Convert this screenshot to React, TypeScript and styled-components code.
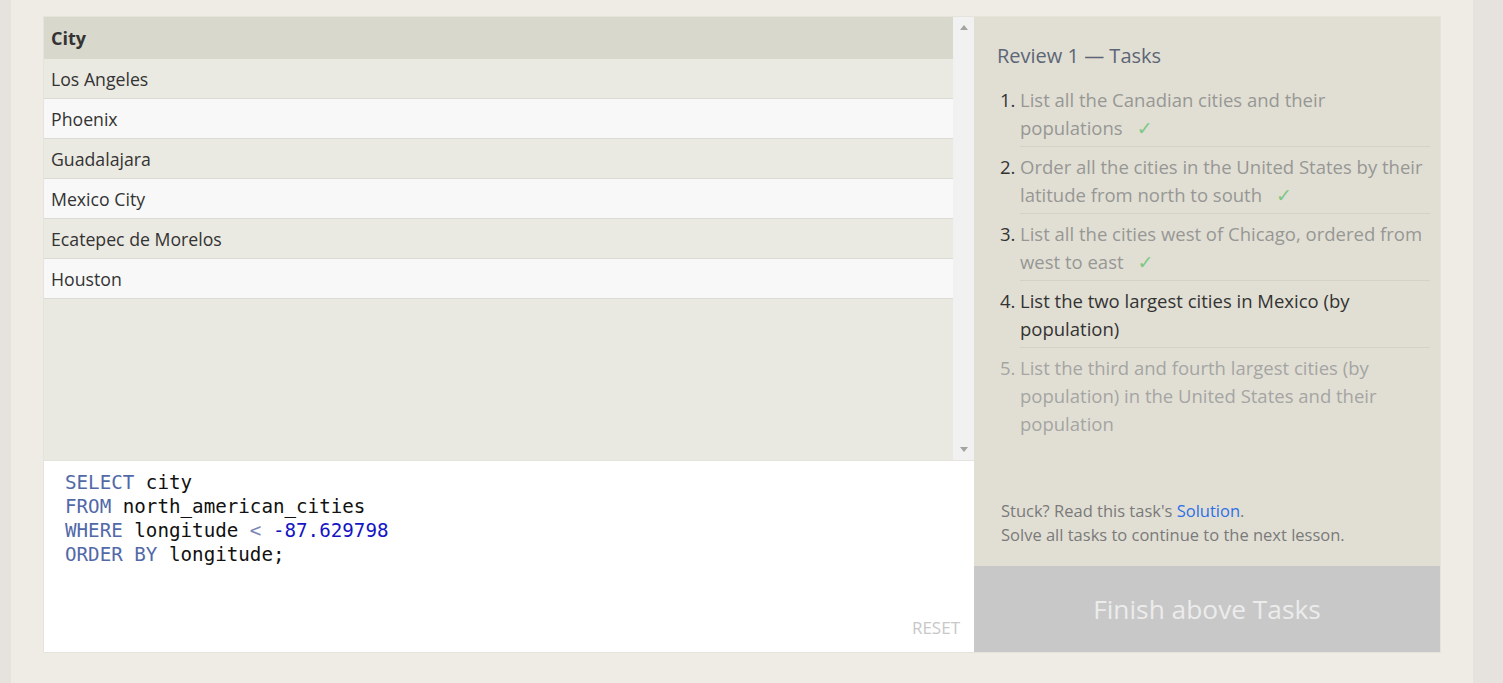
import styled, { createGlobalStyle } from 'styled-components'

interface Task {
  text: string
  state: 'done' | 'current' | 'todo'
}

const cities = ['Los Angeles', 'Phoenix', 'Guadalajara', 'Mexico City', 'Ecatepec de Morelos', 'Houston']

const tasks: Task[] = [
  { text: 'List all the Canadian cities and their populations', state: 'done' },
  { text: 'Order all the cities in the United States by their latitude from north to south', state: 'done' },
  { text: 'List all the cities west of Chicago, ordered from west to east', state: 'done' },
  { text: 'List the two largest cities in Mexico (by population)', state: 'current' },
  { text: 'List the third and fourth largest cities (by population) in the United States and their population', state: 'todo' },
]

export default function App() {
  return (
    <>
      <GlobalStyle />
      <Page>
        <Panel>
          <LeftColumn>
            <Results>
              <Table>
                <HeaderCell>City</HeaderCell>
                {cities.map((city, i) => (
                  <Row key={city} odd={i % 2 === 0}>
                    {city}
                  </Row>
                ))}
              </Table>
              <Scrollbar>
                <Arrow dir="up" />
                <Arrow dir="down" />
              </Scrollbar>
            </Results>
            <Editor>
              <Code>
                <Kw>SELECT</Kw> city{'\n'}
                <Kw>FROM</Kw> north_american_cities{'\n'}
                <Kw>WHERE</Kw> longitude <Op>&lt;</Op> <Num>-87.629798</Num>{'\n'}
                <Kw>ORDER BY</Kw> longitude;
              </Code>
              <Reset>RESET</Reset>
            </Editor>
          </LeftColumn>
          <TaskPanel>
            <TaskBody>
              <Title>Review 1 — Tasks</Title>
              <TaskList>
                {tasks.map((task, i) => (
                  <TaskItem key={i}>
                    <TaskNum state={task.state}>{i + 1}.</TaskNum>
                    <TaskText state={task.state} last={i === tasks.length - 1}>
                      {task.text}
                      {task.state === 'done' && <Check>✓</Check>}
                    </TaskText>
                  </TaskItem>
                ))}
              </TaskList>
              <Hint>
                Stuck? Read this task's <HintLink>Solution</HintLink>.
                <br />
                Solve all tasks to continue to the next lesson.
              </Hint>
            </TaskBody>
            <FinishButton>Finish above Tasks</FinishButton>
          </TaskPanel>
        </Panel>
      </Page>
    </>
  )
}

const GlobalStyle = createGlobalStyle`
  body {
    margin: 0;
    background: #e6e3df;
    font-family: "Open Sans", "Noto Sans", sans-serif;
    overflow: hidden;
  }
`

const Page = styled.div`
  margin-left: 11px;
  width: 1462px;
  height: 683px;
  box-sizing: border-box;
  padding: 17px 33px 0;
  background: #efece5;
`

const Panel = styled.div`
  display: grid;
  grid-template-columns: 930px 466px;
  height: 635px;
  outline: 1px solid #e6e3da;
`

const LeftColumn = styled.div`
  display: flex;
  flex-direction: column;
`

const Results = styled.div`
  display: flex;
  height: 443px;
  background: #e9e8e1;
`

const Table = styled.div`
  flex: 1;
  display: flex;
  flex-direction: column;
`

const HeaderCell = styled.div`
  height: 42px;
  display: flex;
  align-items: center;
  padding-left: 7px;
  background: #d9d8cc;
  color: #333;
  font-weight: 700;
  font-size: 18px;
`

const Row = styled.div<{ odd: boolean }>`
  height: 39px;
  display: flex;
  align-items: center;
  padding-left: 7px;
  border-bottom: 1px solid #dcdbd3;
  background: ${({ odd }) => (odd ? '#eae9e2' : '#f8f8f8')};
  color: #333;
  font-size: 17.7px;
`

const Scrollbar = styled.div`
  width: 21px;
  display: flex;
  flex-direction: column;
  justify-content: space-between;
  align-items: center;
  padding: 8px 0;
  box-sizing: border-box;
  background: #f1f1f1;
`

const Arrow = styled.div<{ dir: 'up' | 'down' }>`
  width: 0;
  height: 0;
  border-left: 4px solid transparent;
  border-right: 4px solid transparent;
  ${({ dir }) => (dir === 'up' ? 'border-bottom: 5px solid #a3a3a3;' : 'border-top: 5px solid #a3a3a3;')}
`

const Editor = styled.div`
  flex: 1;
  position: relative;
  background: #fff;
  border-top: 1px solid #e4e3dc;
`

const Code = styled.pre`
  margin: 0;
  padding: 10px 21px;
  font-family: "DejaVu Sans Mono", "Liberation Mono", monospace;
  font-size: 19.2px;
  line-height: 24px;
  color: #111;
`

const Kw = styled.span`
  color: #5269a8;
`

const Op = styled.span`
  color: #7b86b8;
`

const Num = styled.span`
  color: #1414c4;
`

const Reset = styled.div`
  position: absolute;
  right: 14px;
  bottom: 13px;
  color: #c8c8c8;
  font-size: 17px;
`

const TaskPanel = styled.div`
  display: flex;
  flex-direction: column;
  background: #e1dfd4;
`

const TaskBody = styled.div`
  flex: 1;
  display: flex;
  flex-direction: column;
  padding: 25px 10px 0 23px;
`

const Title = styled.div`
  font-size: 20px;
  color: #5d6676;
  margin-bottom: 11px;
`

const TaskList = styled.div`
  display: flex;
  flex-direction: column;
`

const TaskItem = styled.div`
  display: flex;
`

const TaskNum = styled.span<{ state: Task['state'] }>`
  width: 20px;
  padding-left: 3px;
  padding-top: 6px;
  font-size: 18.5px;
  line-height: 28px;
  color: ${({ state }) => (state === 'todo' ? '#a5a5a3' : '#333')};
`

const TaskText = styled.div<{ state: Task['state']; last: boolean }>`
  flex: 1;
  padding: 6px 0 4px;
  font-size: 18.5px;
  line-height: 28px;
  border-bottom: ${({ last }) => (last ? 'none' : '1px solid #d4d2c7')};
  color: ${({ state }) => (state === 'current' ? '#333' : state === 'done' ? '#979794' : '#a5a5a3')};
`

const Check = styled.span`
  margin-left: 14px;
  font-family: "DejaVu Sans", sans-serif;
  font-size: 19px;
  color: #7dc884;
`

const Hint = styled.div`
  margin-top: auto;
  margin-bottom: 19px;
  padding-left: 4px;
  font-size: 16.5px;
  line-height: 24px;
  color: #7a7a7a;
`

const HintLink = styled.a`
  color: #2f6fe4;
`

const FinishButton = styled.div`
  height: 86px;
  display: flex;
  align-items: center;
  justify-content: center;
  background: #c8c8c8;
  color: #ececec;
  font-size: 26.3px;
`
